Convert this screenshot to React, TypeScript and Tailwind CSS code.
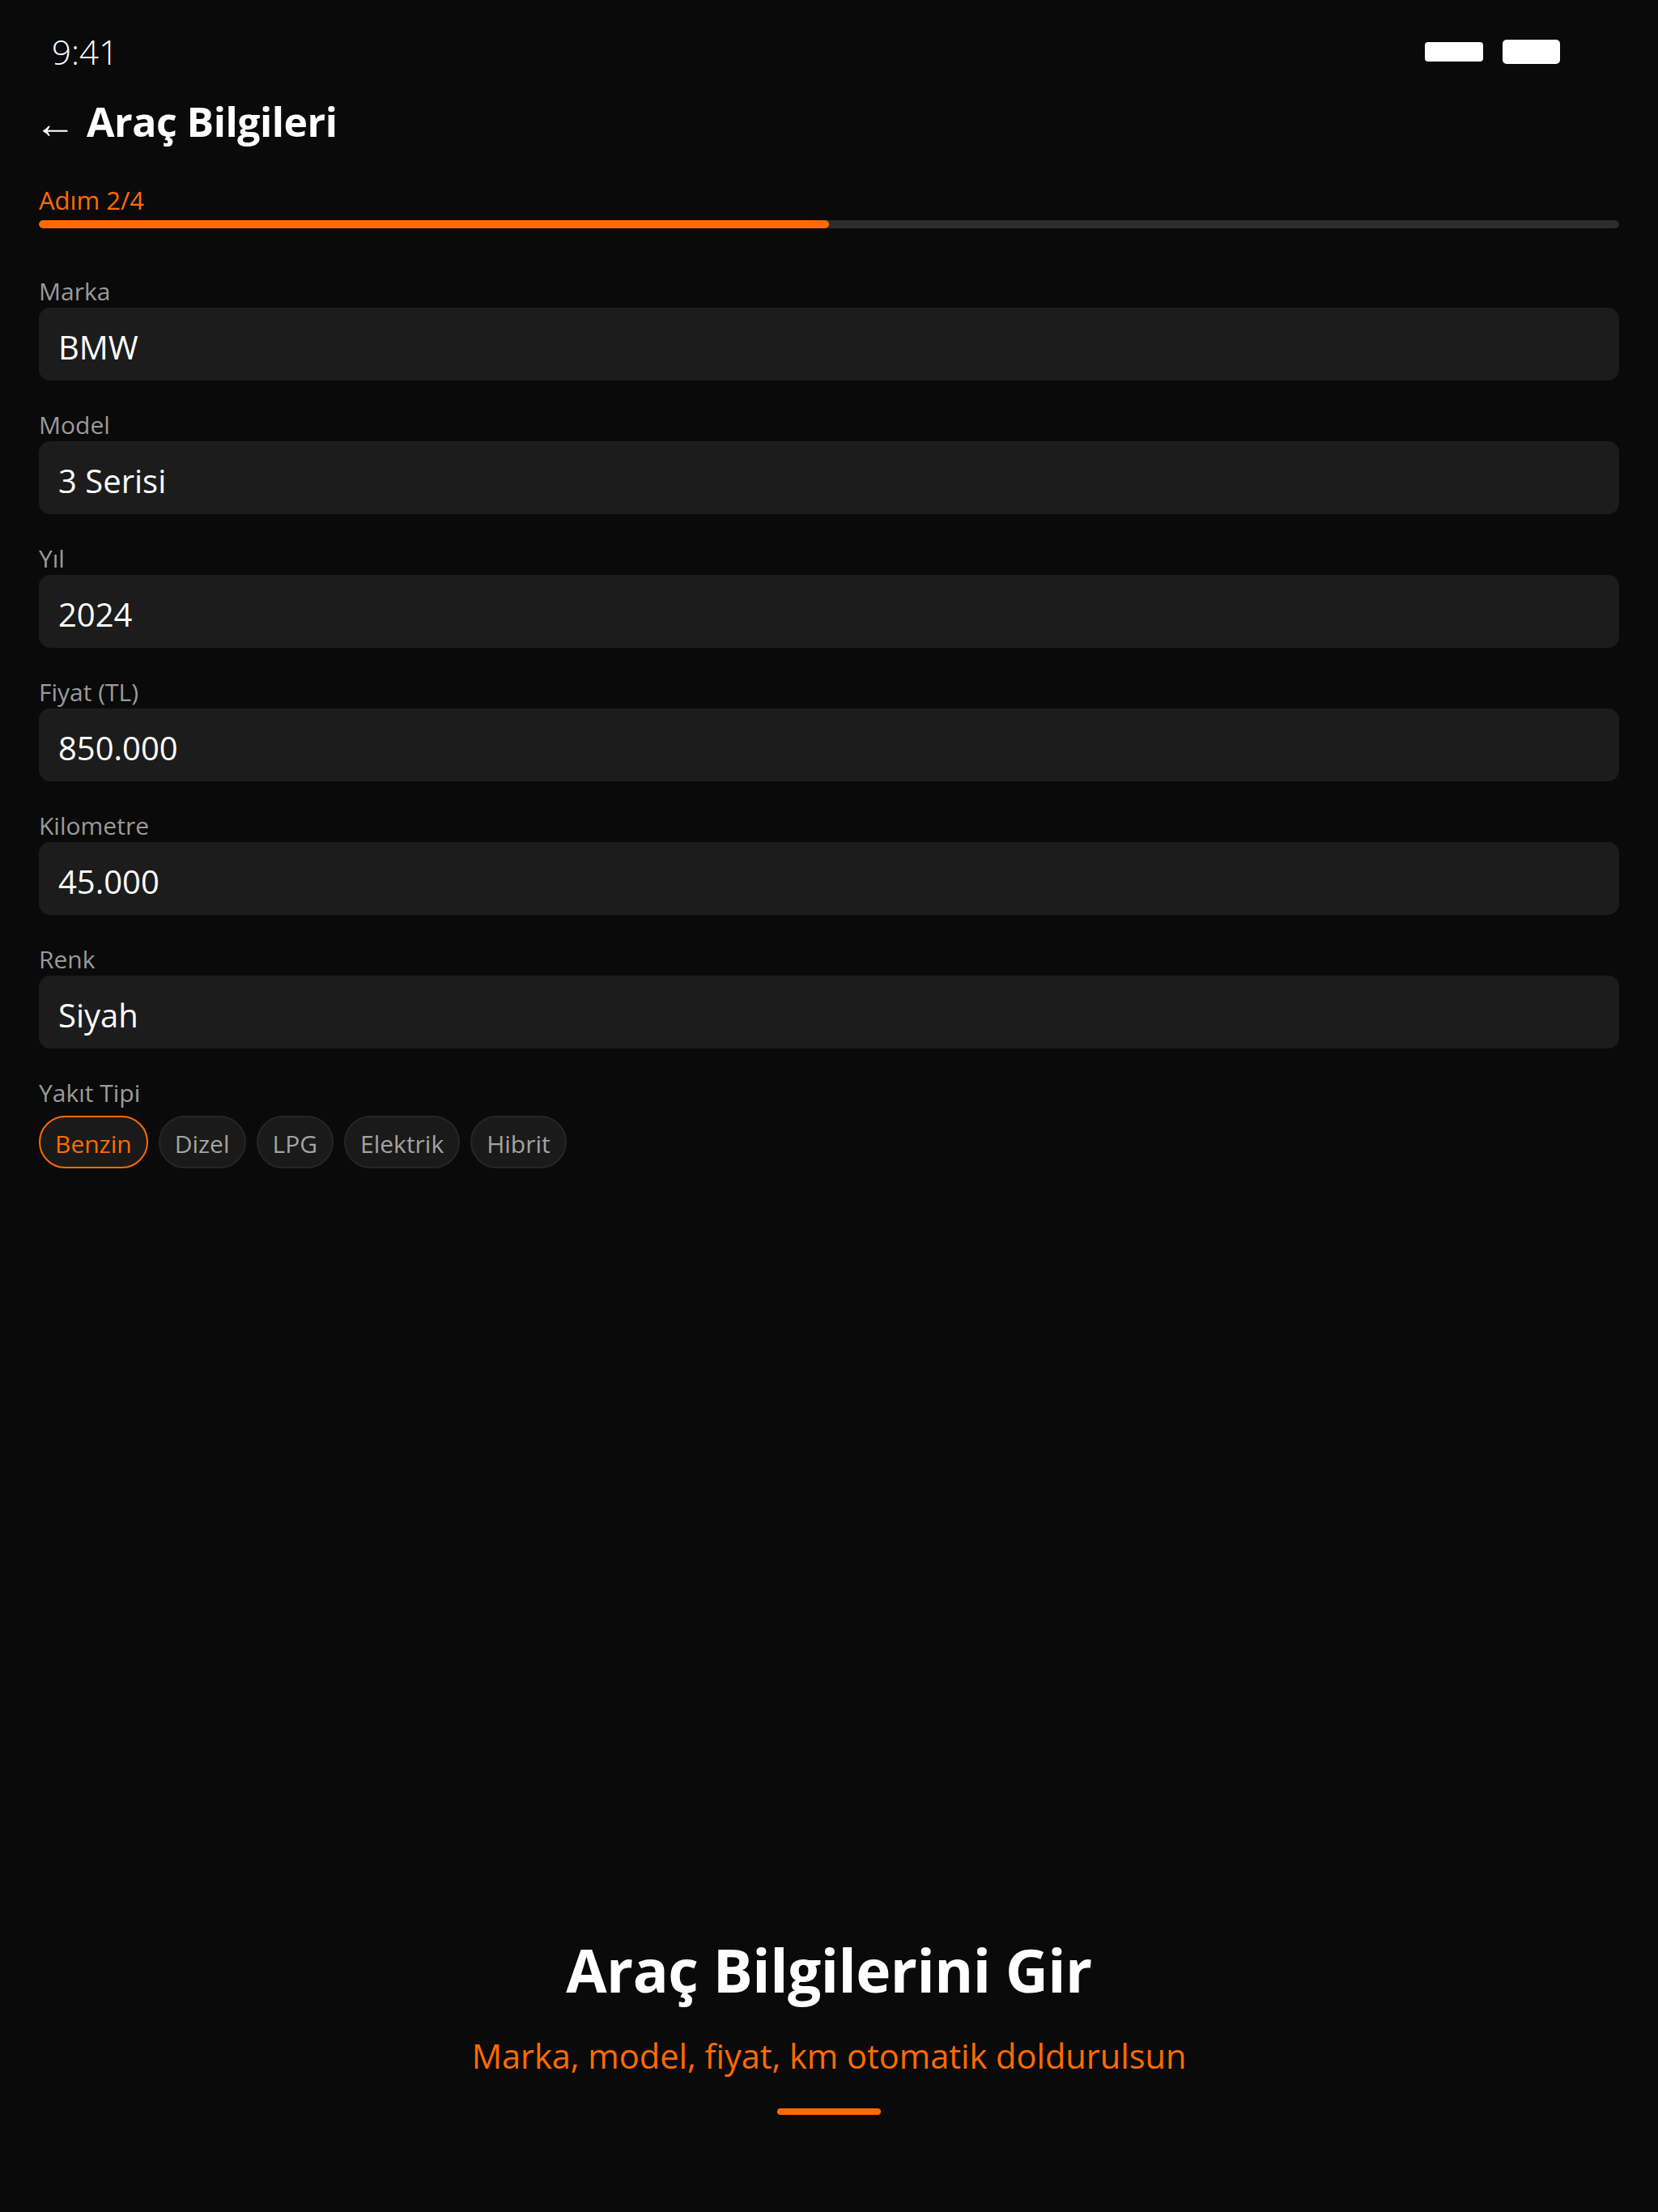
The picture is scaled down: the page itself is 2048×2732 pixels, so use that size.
import React from "react";

const fields = [
  { label: "Marka", value: "BMW" },
  { label: "Model", value: "3 Serisi" },
  { label: "Yıl", value: "2024" },
  { label: "Fiyat (TL)", value: "850.000" },
  { label: "Kilometre", value: "45.000" },
  { label: "Renk", value: "Siyah" },
];

const fuels = ["Benzin", "Dizel", "LPG", "Elektrik", "Hibrit"];

export default function App() {
  const selected = "Benzin";
  const step = 2;
  const total = 4;
  return (
    <div
      className="min-h-[2732px] w-[2048px] bg-[#0a0a0a] text-white flex flex-col"
      style={{ fontFamily: '"Open Sans", "Noto Sans", sans-serif' }}
    >
      {/* status bar */}
      <div className="h-[128px] flex items-center justify-between pl-[64px] pr-[121px]">
        <span className="text-[42px] leading-[42px] font-light text-white">9:41</span>
        <div className="flex items-center gap-[24px]">
          <div className="w-[72px] h-[24px] rounded-[4px] bg-white" />
          <div className="w-[71px] h-[30px] rounded-[5px] bg-white" />
        </div>
      </div>

      <div className="px-[48px] flex flex-col">
        {/* header */}
        <div className="h-[44px] flex items-center gap-[13px]">
          <span className="text-[51px] leading-[44px] text-white -ml-[5px]">←</span>
          <h1 className="text-[50px] leading-[44px] font-bold tracking-[-0.5px]">Araç Bilgileri</h1>
        </div>

        {/* step progress */}
        <div className="mt-[55px] text-[31px] leading-[40px] text-[#ff6b00]">
          Adım {step}/{total}
        </div>
        <div className="mt-[5px] h-[10px] w-full rounded-full bg-[#2d2d2d] overflow-hidden">
          <div className="h-full rounded-full bg-[#ff6b00]" style={{ width: `${(step / total) * 100}%` }} />
        </div>

        {/* form */}
        <div className="mt-[58px] flex flex-col gap-[35px]">
          {fields.map((f) => (
            <div key={f.label} className="flex flex-col">
              <label className="text-[30px] leading-[40px] text-[#9a9a9a]">{f.label}</label>
              <div className="h-[90px] rounded-[14px] bg-[#1c1c1c] flex items-center px-[24px] pt-[8px]">
                <span className="text-[40px] leading-[50px] text-white">{f.value}</span>
              </div>
            </div>
          ))}

          <div className="flex flex-col">
            <label className="text-[30px] leading-[40px] text-[#9a9a9a]">Yakıt Tipi</label>
            <div className="mt-[8px] flex gap-[13px]">
              {fuels.map((fuel) => {
                const active = fuel === selected;
                return (
                  <div
                    key={fuel}
                    className={
                      active
                        ? "h-[65px] px-[18px] pt-[3px] rounded-full border-2 border-[#ff6b00] bg-[#1a1a1a] text-[#ff6b00] flex items-center text-[30px]"
                        : "h-[65px] px-[18px] pt-[3px] rounded-full border-2 border-[#262626] bg-[#1a1a1a] text-[#a3a3a3] flex items-center text-[30px]"
                    }
                  >
                    {fuel}
                  </div>
                );
              })}
            </div>
          </div>
        </div>
      </div>

      {/* footer caption */}
      <div className="mt-auto pb-[120px] flex flex-col items-center">
        <h2 className="text-[73px] leading-[80px] font-bold text-white tracking-[-0.5px]">Araç Bilgilerini Gir</h2>
        <p className="mt-[42px] text-[41.5px] leading-[48px] text-[#ff6b00]">Marka, model, fiyat, km otomatik doldurulsun</p>
        <div className="mt-[41px] w-[128px] h-[8px] rounded-full bg-[#ff6b00]" />
      </div>
    </div>
  );
}
